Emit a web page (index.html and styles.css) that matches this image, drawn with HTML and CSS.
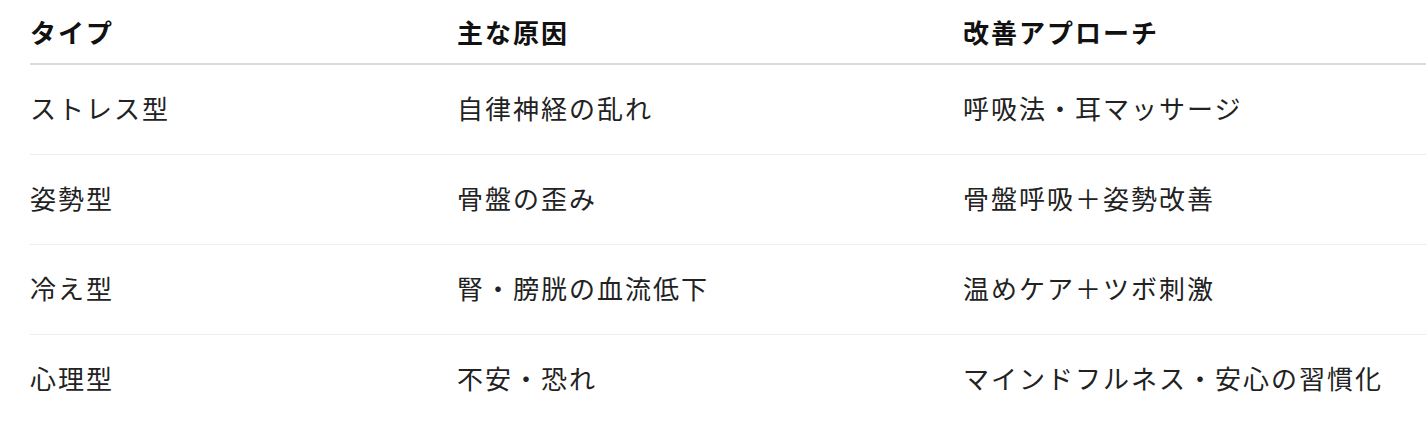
FILE: index.html
```html
<!DOCTYPE html>
<html lang="ja">
<head>
<meta charset="utf-8">
<link rel="stylesheet" href="styles.css">
</head>
<body>
<div class="wrap">
<table class="types">
<colgroup>
<col class="c1"><col class="c2"><col class="c3">
</colgroup>
<thead>
<tr><th>タイプ</th><th>主な原因</th><th>改善アプローチ</th></tr>
</thead>
<tbody>
<tr><td>ストレス型</td><td>自律神経の乱れ</td><td>呼吸法・耳マッサージ</td></tr>
<tr><td>姿勢型</td><td>骨盤の歪み</td><td>骨盤呼吸＋姿勢改善</td></tr>
<tr><td>冷え型</td><td>腎・膀胱の血流低下</td><td>温めケア＋ツボ刺激</td></tr>
<tr><td>心理型</td><td>不安・恐れ</td><td>マインドフルネス・安心の習慣化</td></tr>
</tbody>
</table>
</div>
</body>
</html>
```

FILE: styles.css
```css
html, body {
  margin: 0;
  padding: 0;
  background: #fff;
}
body {
  font-family: "Noto Sans CJK JP", "Noto Sans", sans-serif;
  color: #1a1a1a;
}
.wrap {
  padding-left: 30px;
  overflow: hidden;
}
.types {
  border-collapse: collapse;
  width: 1420px;
  table-layout: fixed;
  font-size: 26px;
  letter-spacing: 2px;
}
.c1 { width: 427px; }
.c2 { width: 506px; }
.types th, .types td {
  padding: 0;
  text-align: left;
  vertical-align: middle;
  line-height: 30px;
  white-space: nowrap;
}
.types th {
  font-weight: 700;
  height: 63px;
  border-bottom: 2px solid #dcdcdc;
  color: #111;
}
.types td {
  height: 85px;
  padding-bottom: 4px;
  border-bottom: 1px solid #ededed;
  color: #222;
}
.types tbody tr:last-child td {
  border-bottom: none;
}
```
